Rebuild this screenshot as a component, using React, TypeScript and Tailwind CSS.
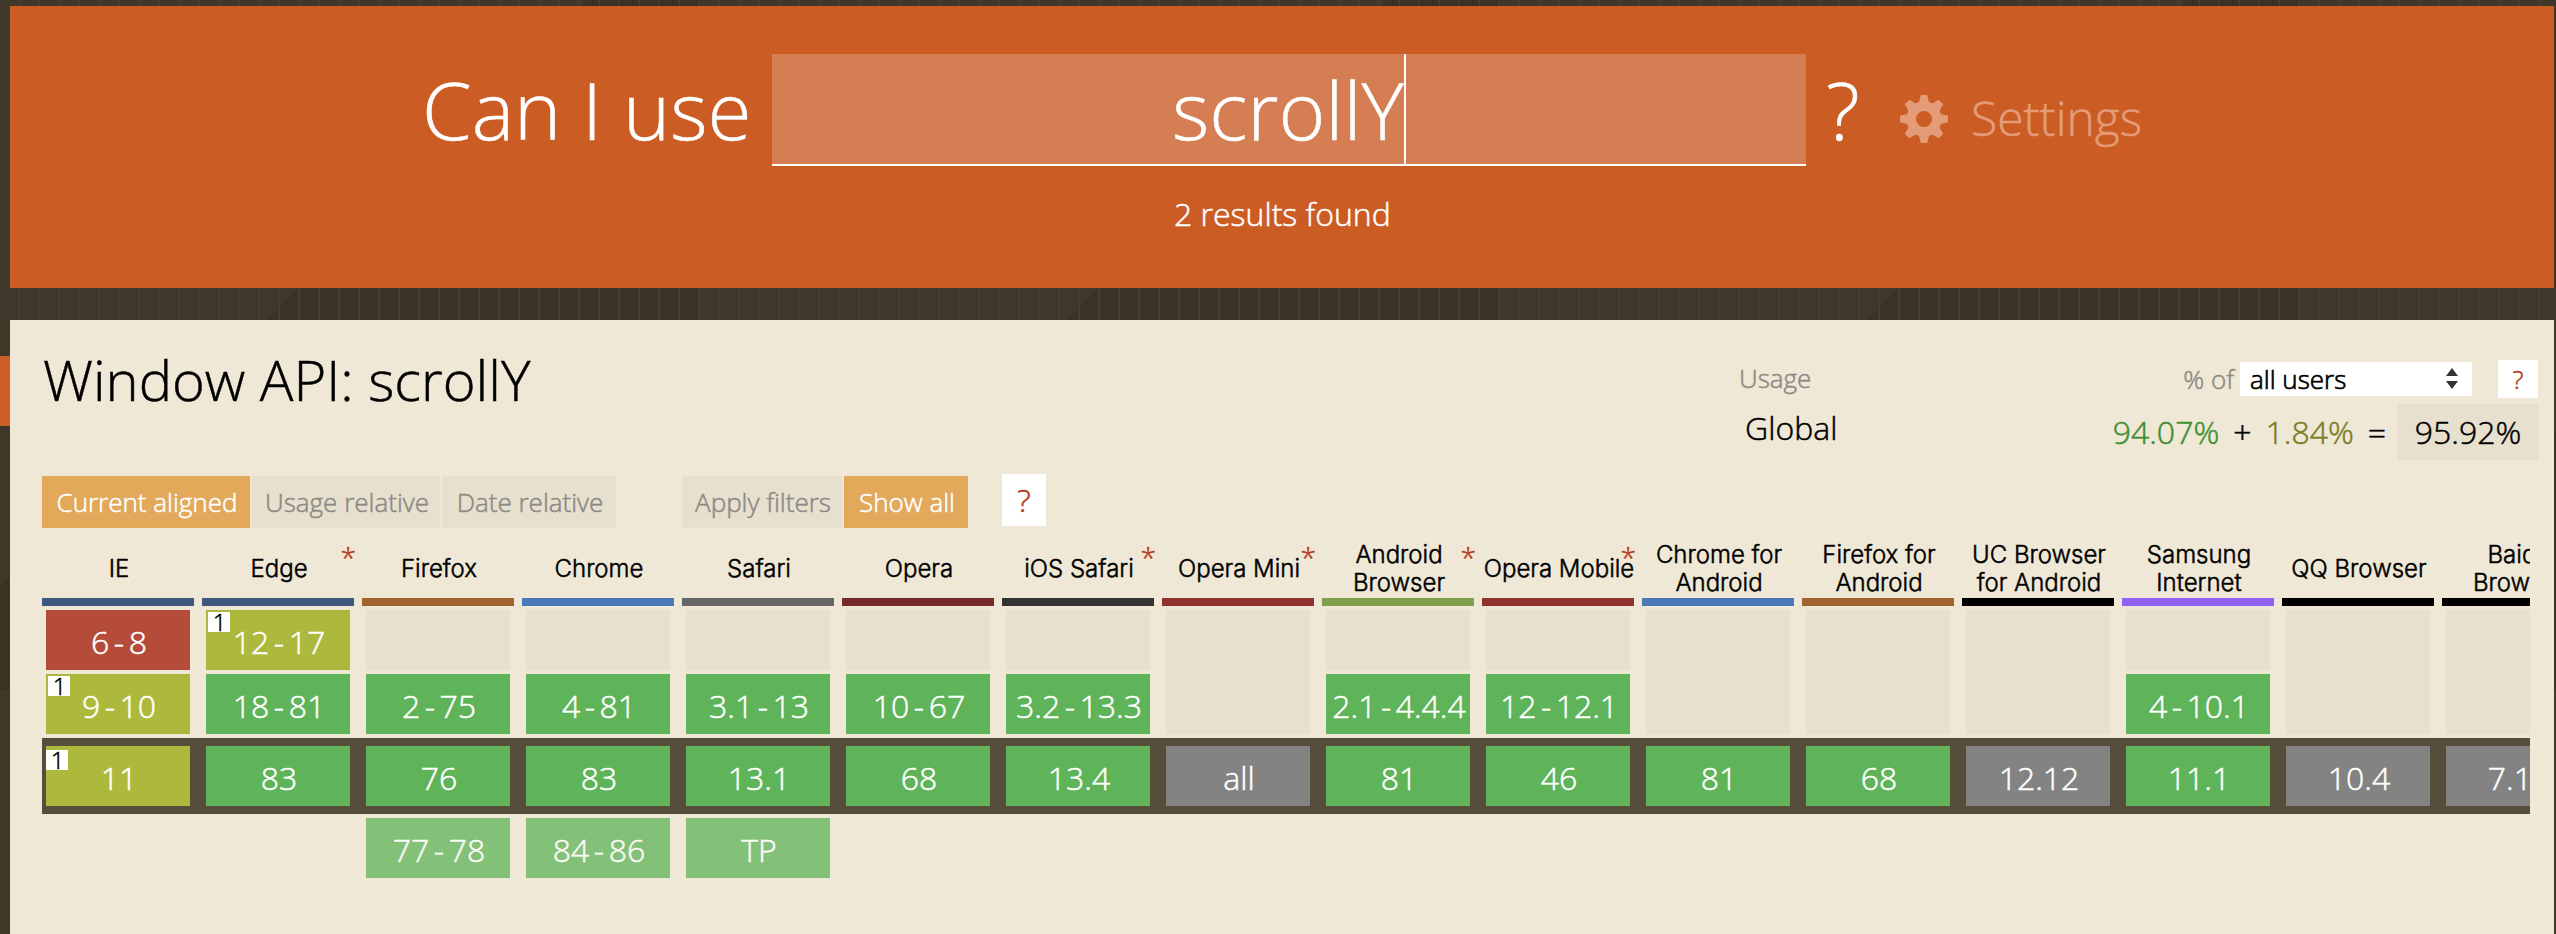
import React from "react";

type Cell = { v: string; k: "g" | "y" | "r" | "u"; note?: boolean };
type Col = { name: string; bar: string; star?: boolean; rows: [Cell | null, Cell | null, Cell, Cell | null] };

const g = (v: string): Cell => ({ v, k: "g" });
const u = (v: string): Cell => ({ v, k: "u" });
const y = (v: string): Cell => ({ v, k: "y", note: true });

const COLS: Col[] = [
  { name: "IE", bar: "bg-[#3e5880]", rows: [{ v: "6-8", k: "r" }, y("9-10"), y("11"), null] },
  { name: "Edge", bar: "bg-[#3e5880]", star: true, rows: [y("12-17"), g("18-81"), g("83"), null] },
  { name: "Firefox", bar: "bg-[#a0642f]", rows: [null, g("2-75"), g("76"), g("77-78")] },
  { name: "Chrome", bar: "bg-[#4a79b9]", rows: [null, g("4-81"), g("83"), g("84-86")] },
  { name: "Safari", bar: "bg-[#666666]", rows: [null, g("3.1-13"), g("13.1"), g("TP")] },
  { name: "Opera", bar: "bg-[#772a27]", rows: [null, g("10-67"), g("68"), null] },
  { name: "iOS Safari", bar: "bg-[#333333]", star: true, rows: [null, g("3.2-13.3"), g("13.4"), null] },
  { name: "Opera Mini", bar: "bg-[#8f312c]", star: true, rows: [null, null, u("all"), null] },
  { name: "Android\nBrowser", bar: "bg-[#82a04b]", star: true, rows: [null, g("2.1-4.4.4"), g("81"), null] },
  { name: "Opera Mobile", bar: "bg-[#8f312c]", star: true, rows: [null, g("12-12.1"), g("46"), null] },
  { name: "Chrome for\nAndroid", bar: "bg-[#4a79b9]", rows: [null, null, g("81"), null] },
  { name: "Firefox for\nAndroid", bar: "bg-[#a0642f]", rows: [null, null, g("68"), null] },
  { name: "UC Browser\nfor Android", bar: "bg-black", rows: [null, null, u("12.12"), null] },
  { name: "Samsung\nInternet", bar: "bg-[#8f60f3]", rows: [null, g("4-10.1"), g("11.1"), null] },
  { name: "QQ Browser", bar: "bg-black", rows: [null, null, u("10.4"), null] },
  { name: "Baidu\nBrowser", bar: "bg-black", rows: [null, null, u("7.12"), null] },
];

const FILL = { g: "bg-[#5fb359]", y: "bg-[#adb93c]", r: "bg-[#b54c39]", u: "bg-[#838383]" };

function Version({ cell, current, future }: { cell: Cell; current?: boolean; future?: boolean }) {
  const parts = cell.v.split("-");
  return (
    <div
      className={`relative flex h-[60px] w-[144px] items-center justify-center whitespace-nowrap pt-[3px] pl-[2px] text-[32px] leading-none text-white ${FILL[cell.k]} ${future ? "opacity-75" : ""}`}
    >
      {parts[0]}
      {parts.length > 1 && <span className="mx-[4.500px]">-</span>}
      {parts[1]}
      {cell.note && (
        <span
          className={`absolute flex h-5 w-[22px] items-center justify-center bg-white pl-px text-[24px] leading-none text-black ${current ? "left-0 top-1" : "left-[2px] top-[2px]"}`}
        >
          1
        </span>
      )}
    </div>
  );
}

function Column({ col }: { col: Col }) {
  const [a, b, c, d] = col.rows;
  return (
    <div className="flex w-[152px] shrink-0 flex-col items-center">
      <div className="relative flex h-[58px] w-full items-center justify-center whitespace-pre pb-px pl-[2px] text-center font-[Inter] text-[24px] leading-[28px] font-light text-black">
        {col.name}
        {col.star && (
          <span className="absolute right-[-2px] top-px font-['Open_Sans'] text-[28px] leading-[32px] text-[#b23c22]">*</span>
        )}
      </div>
      <div className={`h-2 w-full ${col.bar}`} />
      {a || b ? (
        <div className="mt-1 flex flex-col gap-1">
          {a ? <Version cell={a} /> : <div className="h-[60px] w-[144px] bg-[#e7e0cf]" />}
          {b && <Version cell={b} />}
        </div>
      ) : (
        <div className="mt-1 h-[124px] w-[144px] bg-[#e7e0cf]" />
      )}
      <div className="mt-3">
        <Version cell={c} current />
      </div>
      {d && (
        <div className="mt-3">
          <Version cell={d} future />
        </div>
      )}
    </div>
  );
}

function Gear() {
  const teeth = [0, 45, 90, 135, 180, 225, 270, 315];
  return (
    <svg viewBox="-24 -24 48 48" className="h-12 w-12" fill="#e39b78">
      {teeth.map((t) => (
        <path key={t} d="M-7.500 -15 Q-4.900 -16.500 -4.500 -18.500 L-3.500 -23.300 Q-3.300 -24 -2.600 -24 L2.600 -24 Q3.300 -24 3.500 -23.300 L4.500 -18.500 Q4.900 -16.500 7.500 -15 Z" transform={`rotate(${t})`} />
      ))}
      <path fillRule="evenodd" d="M0 -17.500 A17.500 17.500 0 1 0 0 17.500 A17.500 17.500 0 1 0 0 -17.500 Z M0 -8 A8 8 0 1 1 0 8 A8 8 0 1 1 0 -8 Z" />
    </svg>
  );
}

function Backdrop() {
  return (
    <svg className="absolute inset-0 h-[934px] w-[2556px]" viewBox="0 0 2556 934">
      <defs>
        <pattern id="facets" width="800" height="800" patternUnits="userSpaceOnUse">
          <path d="M587 0 H700 V690 H0 V587 Z" fill="#3b3226" />
        </pattern>
        <pattern id="stripes" width="20" height="20" patternUnits="userSpaceOnUse">
          <rect x="18.500" width="1.500" height="20" fill="#483f33" />
        </pattern>
      </defs>
      <rect width="2556" height="934" fill="#40372b" />
      <rect width="2556" height="934" fill="url(#facets)" />
      <rect width="2556" height="934" fill="url(#stripes)" />
    </svg>
  );
}

const TAB = "flex h-[52px] items-center justify-center pl-[2px] text-[26px] leading-none";
const OFF = "bg-[#e7e0cf] text-[#8c8a84]";
const ON = "bg-[#e2a95a] text-white";

export default function App() {
  return (
    <div className="relative isolate h-[934px] w-[2556px] overflow-hidden pl-[10px] pt-[6px] font-['Open_Sans',sans-serif] font-light [-webkit-text-stroke:0.5px]">
      <Backdrop />
      <div className="absolute left-0 top-[356px] h-[70px] w-[10px] bg-[#cd5f26]" />
      <header className="relative flex h-[282px] w-[2544px] flex-col bg-[#cb5c24] pt-12 text-white">
        <div className="flex h-[112px]">
          <div className="ml-[412px] w-[350px] whitespace-nowrap text-[80px] leading-[110px]">Can I use</div>
          <div className="flex h-[112px] w-[1034px] border-b-2 border-white bg-[#d57e53] pl-[400px] text-[80px] leading-[110px]">
            scrollY
            <div className="h-[110px] w-[2px] bg-white" />
          </div>
          <div className="ml-[20px] w-[72px] text-[80px] leading-[110px]">?</div>
          <div className="mt-[41px] ml-[2px]">
            <Gear />
          </div>
          <div className="ml-[23px] pt-[32px] text-[48px] leading-[64px] text-[#e39b78]">Settings</div>
        </div>
        <div className="ml-[1164px] mt-[26px] text-[32px] leading-[44px]">2 results found</div>
      </header>

      <main className="relative mt-8 h-[614px] w-[2544px] bg-[#efe8d6] pl-8">
        <div className="flex h-[156px] w-[2496px] justify-between text-black">
          <h1 className="pl-px pt-[21px] text-[56px] leading-[76px]">Window API: scrollY</h1>
          <div className="w-[800px] pt-10">
            <div className="flex h-[38px] items-center text-[26px] leading-none text-[#8c8a84]">
              <span className="-mt-[2px] ml-px">Usage</span>
              <span className="-mt-px ml-auto mr-[6px]">% of</span>
              <div className="flex h-[34px] w-[232px] items-center justify-between bg-white pb-px pl-[10px] pr-[14px] text-black [-webkit-text-stroke:0.7px]">
                all users
                <svg viewBox="0 0 12 21" className="h-[21px] w-3" fill="#333">
                  <path d="M0 8 L6 0 L12 8 Z M0 13 L12 13 L6 21 Z" />
                </svg>
              </div>
              <div className="ml-[26px] flex h-[38px] w-10 items-center justify-center bg-white text-[#b23c22]">?</div>
            </div>
            <div className="mt-[6px] flex h-14 items-center text-[32px] leading-none">
              <span className="-mt-[8px] ml-[7px]">Global</span>
              <span className="ml-auto text-[#3f8e32]">94.07%</span>
              <span className="ml-[14px]">+</span>
              <span className="ml-[14px] text-[#7e7c27]">1.84%</span>
              <span className="ml-[14px]">=</span>
              <span className="ml-[12px] flex h-14 w-[140px] items-center justify-center bg-[#e7e0cf]">95.92%</span>
            </div>
          </div>
        </div>

        <div className="flex h-[52px]">
          <div className={`${TAB} ${ON} w-[208px]`}>Current aligned</div>
          <div className={`${TAB} ${OFF} ml-[2px] w-[188px]`}>Usage relative</div>
          <div className={`${TAB} ${OFF} ml-[2px] w-[174px]`}>Date relative</div>
          <div className={`${TAB} ${OFF} ml-[66px] w-[160px]`}>Apply filters</div>
          <div className={`${TAB} ${ON} ml-[2px] w-[124px]`}>Show all</div>
          <div className="-mt-[2px] ml-[34px] flex h-[52px] w-[44px] items-center justify-center bg-white text-[32px] leading-none text-[#b23c22]">?</div>
        </div>

        <div className="mt-[12px] h-[382px] w-[2488px] overflow-hidden bg-[linear-gradient(#564d3c,#564d3c)] bg-[length:100%_76px] bg-[position:0_198px] bg-no-repeat">
          <div className="flex gap-2">
            {COLS.map((c) => (
              <Column key={c.name} col={c} />
            ))}
          </div>
        </div>
      </main>
    </div>
  );
}
